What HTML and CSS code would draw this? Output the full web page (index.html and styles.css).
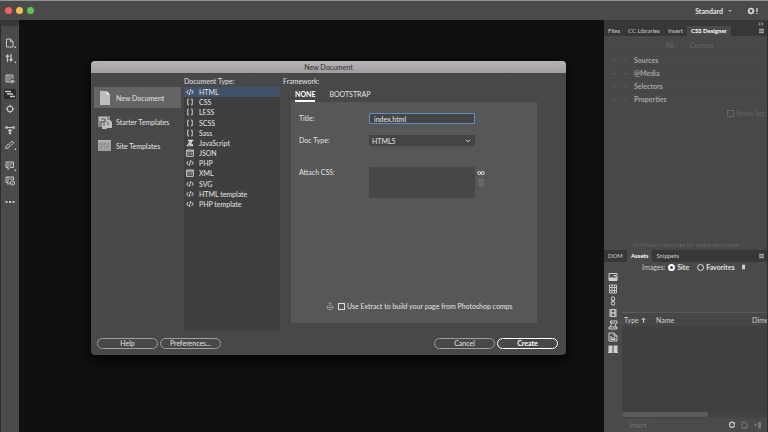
FILE: index.html
```html
<!DOCTYPE html>
<html lang="en">
<head>
<meta charset="utf-8">
<title>New Document</title>
<link rel="stylesheet" href="styles.css">
</head>
<body>
<svg class="defs" aria-hidden="true">
  <symbol id="code" viewBox="0 0 12 12"><path d="M3.500 3L1 6l2.500 3M8.500 3L11 6 8.500 9M7.300 1.500l-2.600 9" fill="none" stroke="currentColor" stroke-width="1.300"/></symbol>
  <symbol id="braces" viewBox="0 0 12 12"><path d="M4 1.500H2.800v3.300L1.700 6l1.100 1.200v3.300H4M8 1.500h1.200v3.300L10.300 6 9.200 7.200v3.300H8" fill="none" stroke="currentColor" stroke-width="1.400"/></symbol>
  <symbol id="scroll" viewBox="0 0 12 12"><path d="M3 1h8v2H9.500L8 8h2.500v3H1V8.500h2L4.500 3H3z" fill="currentColor"/><path d="M5.500 4h2.300M5 6h2.300M3 9.500h5" stroke="#444" stroke-width=".8"/></symbol>
  <symbol id="boxed" viewBox="0 0 12 12"><path d="M1 1.500h10v9.500H1zM1 3.200h10" fill="none" stroke="currentColor" stroke-width="1.300"/><path d="M4.500 5L3 7l1.500 2M7.500 5L9 7 7.500 9M6 6.200v1.600" fill="none" stroke="currentColor"/></symbol>
</svg>

<header class="titlebar">
  <div class="lights"><i class="red"></i><i class="yellow"></i><i class="green"></i></div>
  <button class="workspace">Standard <span class="caret"></span></button>
  <button class="gear" aria-label="Sync settings">
    <svg viewBox="0 0 12 8"><circle cx="4" cy="4" r="2.300" fill="none" stroke="currentColor" stroke-width="1.500"/><path d="M4 .5v7M.5 4h7M1.500 1.500l5 5M6.500 1.500l-5 5" stroke="currentColor" stroke-width=".7"/><circle cx="4" cy="4" r="1.400" fill="#4a4a4a"/><path d="M10 1v4M10 6v1" stroke="currentColor" stroke-width="1.200"/></svg>
  </button>
</header>

<div class="workarea">
  <nav class="tools" aria-label="Tools">
    <div class="group">
      <button aria-label="Open documents"><svg viewBox="0 0 12 10"><path d="M2.500 1h4L9 3.500V9H2.500zM6.500 1v2.700H9" fill="none" stroke="currentColor"/><path d="M12 8v2h-2z" fill="currentColor"/></svg></button>
      <button aria-label="File management"><svg viewBox="0 0 12 10"><path d="M3.500 9V2M7 1v7" stroke="currentColor" stroke-width="1.300"/><path d="M1.300 4l2.200-3 2.200 3zM4.800 6L7 9l2.200-3z" fill="currentColor"/><path d="M12 8v2h-2z" fill="currentColor"/></svg></button>
    </div>
    <div class="group">
      <button aria-label="Live view options"><svg viewBox="0 0 12 10"><path d="M8 8H2V1h7v4M4 1v7M5 3h3M5 5h2" fill="none" stroke="currentColor"/><path d="M5.500 7.500Q8 4.800 11 7.500 8 10.500 5.500 7.500" fill="#4a4a4a" stroke="currentColor" stroke-width=".8"/><circle cx="8.200" cy="7.500" r="1" fill="currentColor"/></svg></button>
      <button class="on" aria-label="Format source"><svg viewBox="0 0 12 10"><path d="M1 2.500h6M3 5h6M6 7.500h5" stroke="currentColor" stroke-width="1.300"/></svg></button>
      <button aria-label="Inspect"><svg viewBox="0 0 12 10"><circle cx="6" cy="5" r="2.700" fill="none" stroke="currentColor" stroke-width="1.100"/><path d="M6 .8v2M6 7.200v2M1.800 5h2M8.200 5h2" stroke="currentColor" stroke-width="1.100"/></svg></button>
    </div>
    <div class="group">
      <button aria-label="Expand all"><svg viewBox="0 0 12 10"><path d="M2 2.500h8M6 3.500v2" stroke="currentColor"/><path d="M1.500 1.500h2v2h-2zM8.500 1.500h2v2h-2zM3.800 5h4.400L6 7.500zM5 7.500h2v1.500H5z" fill="currentColor" stroke="currentColor" stroke-width=".4"/></svg></button>
      <button aria-label="Format"><svg viewBox="0 0 12 10"><path d="M1.500 8.500l1-3 2-1.500 1.500 1.500L5 7.500l-3 1.200M5.500 3.500L8 1.200l1.800 1.500L7 5.500" fill="none" stroke="currentColor"/><path d="M12 8v2h-2z" fill="currentColor"/></svg></button>
    </div>
    <div class="group">
      <button aria-label="Apply comment"><svg viewBox="0 0 12 10"><path d="M2 1h7.500v5.500H6L4 8.500v-2H2zM4 1v5M5.500 3h3M5.500 4.800h2" fill="none" stroke="currentColor"/><path d="M12 8v2h-2z" fill="currentColor"/></svg></button>
      <button aria-label="Remove comment"><svg viewBox="0 0 12 10"><path d="M6 6.500L4 8.500v-2H2V1h7.500v3M4 1v5M5.500 3h3" fill="none" stroke="currentColor"/><circle cx="8.500" cy="7" r="2.200" fill="#4a4a4a" stroke="currentColor"/><path d="M7 8.500l3-3" stroke="currentColor" stroke-width=".8"/></svg></button>
    </div>
    <div class="group">
      <button aria-label="More tools"><svg viewBox="0 0 12 10"><path d="M1.500 4h2v2h-2zM5 4h2v2H5zM8.500 4h2v2h-2z" fill="currentColor"/></svg></button>
    </div>
  </nav>

  <main class="canvas">
    <section class="dialog" role="dialog" aria-labelledby="dlg-title">
      <h1 id="dlg-title">New Document</h1>
      <div class="dialog-body">
        <div class="kinds">
          <button class="on"><svg viewBox="0 0 14 14"><path d="M2 0h6.500L12 3.500V14H2z" fill="#bcbcbc"/><path d="M8.500 0v3.500H12z" fill="#eee"/></svg>New Document</button>
          <button><svg viewBox="0 0 14 14"><path d="M0 1h12v11H0z" fill="#858585"/><path d="M1 2h8v4H1zM4 7h5v7H4zM9 5h3l2 2v6H9z" fill="#bebebe"/><path d="M3 4h4v3H3M6 8v3M10 7v3" fill="none" stroke="#555"/></svg>Starter Templates</button>
          <button><svg viewBox="0 0 14 14"><path d="M0 1h13v11H0z" fill="#a2a2a2"/><path d="M0 1h13v2H0z" fill="#b4b4b4"/><path d="M1 5h11M1 8h11M3 3v8M6.500 3v8M10 3v8" stroke="#929292" stroke-width=".6"/></svg>Site Templates</button>
        </div>
        <div class="types">
          <h2>Document Type:</h2>
          <div class="list">
            <ul>
              <li class="on"><svg><use href="#code"/></svg>HTML</li>
              <li><svg><use href="#braces"/></svg>CSS</li>
              <li><svg><use href="#braces"/></svg>LESS</li>
              <li><svg><use href="#braces"/></svg>SCSS</li>
              <li><svg><use href="#braces"/></svg>Sass</li>
              <li><svg><use href="#scroll"/></svg>JavaScript</li>
              <li><svg><use href="#boxed"/></svg>JSON</li>
              <li><svg><use href="#code"/></svg>PHP</li>
              <li><svg><use href="#boxed"/></svg>XML</li>
              <li><svg><use href="#code"/></svg>SVG</li>
              <li><svg><use href="#code"/></svg>HTML template</li>
              <li><svg><use href="#code"/></svg>PHP template</li>
            </ul>
          </div>
        </div>
        <div class="framework">
          <h2>Framework:</h2>
          <div class="fw-tabs"><button class="on">NONE</button><button>BOOTSTRAP</button></div>
          <form class="settings">
            <label for="title">Title:</label>
            <input id="title" type="text" value="index.html">
            <label for="doctype">Doc Type:</label>
            <div class="select">
              <select id="doctype"><option>HTML5</option></select>
              <svg viewBox="0 0 6 4"><path d="M1 .8l2 2 2-2" fill="none" stroke="currentColor"/></svg>
            </div>
            <label for="css" class="css-label">Attach CSS:</label>
            <textarea id="css"></textarea>
            <div class="css-actions">
              <button type="button" aria-label="Link style sheet"><svg viewBox="0 0 8 8"><circle cx="2.300" cy="4" r="1.500" fill="none" stroke="currentColor"/><circle cx="5.700" cy="4" r="1.500" fill="none" stroke="currentColor"/></svg></button>
              <button type="button" class="dim" aria-label="Remove style sheet"><svg viewBox="0 0 8 8"><path d="M1 2h6M3 2V1h2v1M2 2v5.500h4V2M4 3v4" fill="none" stroke="currentColor"/></svg></button>
            </div>
            <div class="extract">
              <svg viewBox="0 0 8 8"><path d="M4 .5v5M2.500 2L4 .5 5.500 2M2.500 3L.8 5.500l1.400 2h3.600l1.400-2L5.500 3M1 5.500h6" fill="none" stroke="currentColor" stroke-width=".9"/></svg>
              <input id="extract" type="checkbox"><label for="extract">Use Extract to build your page from Photoshop comps</label>
            </div>
          </form>
        </div>
      </div>
      <footer>
        <button>Help</button><button>Preferences...</button><span class="spring"></span><button>Cancel</button><button class="primary">Create</button>
      </footer>
    </section>
  </main>

  <aside class="panels">
    <div class="collapse"><svg viewBox="0 0 6 4"><path d="M.8.500l1.500 1.500L.8 3.500M3.500.500L5 2 3.500 3.500" fill="none" stroke="currentColor" stroke-width=".8"/></svg></div>
    <div class="tabs">
      <button>Files</button><button>CC Libraries</button><button>Insert</button><button class="on">CSS Designer</button>
      <svg class="menu" viewBox="0 0 6 6"><path d="M0 1h6M0 3h6M0 5h6" stroke="currentColor"/></svg>
    </div>
    <section class="designer">
      <div class="scope"><button>All</button><button>Current</button></div>
      <ul>
        <li><i>+</i><i>–</i>Sources</li>
        <li><i>+</i><i>–</i>@Media</li>
        <li><i>+</i><i>–</i>Selectors</li>
        <li><i>+</i><i>–</i>Properties</li>
      </ul>
      <div class="show-set"><input id="showset" type="checkbox" disabled><label for="showset">Show Set</label></div>
      <p>All Mode: Lists rules for entire document</p>
    </section>
    <div class="tabs lower">
      <button>DOM</button><button class="on">Assets</button><button>Snippets</button>
      <svg class="menu" viewBox="0 0 6 6"><path d="M0 1h6M0 3h6M0 5h6" stroke="currentColor"/></svg>
    </div>
    <section class="assets">
      <div class="source">
        <span>Images:</span>
        <input id="site" type="radio" name="src" checked><label for="site">Site</label>
        <input id="fav" type="radio" name="src"><label for="fav">Favorites</label>
        <svg viewBox="0 0 4 6"><path d="M0 0h4v6H0z" fill="currentColor"/></svg>
      </div>
      <div class="asset-body">
        <div class="asset-kinds">
          <button aria-label="Images"><svg viewBox="0 0 10 10"><path d="M1 1.500h8v7H1z" fill="none" stroke="currentColor"/><path d="M1 6l3-1 2 1 3-1v3.500H1zM5.500 3h2.500v1.500H5.500z" fill="currentColor"/></svg></button>
          <button aria-label="Colors"><svg viewBox="0 0 10 10"><path d="M1.500 1h7v8h-7zM1.500 3.500h7M1.500 6.500h7M4 1v8M6.500 1v8" fill="none" stroke="currentColor" stroke-width=".9"/></svg></button>
          <button aria-label="URLs"><svg viewBox="0 0 10 10"><rect x="3.300" y=".8" width="3.400" height="4" rx="1.700" fill="none" stroke="currentColor"/><rect x="3.300" y="5.200" width="3.400" height="4" rx="1.700" fill="none" stroke="currentColor"/><path d="M5 3.500v3" stroke="currentColor"/></svg></button>
          <button aria-label="Media"><svg viewBox="0 0 10 10"><path d="M1.500 1h7v8h-7z" fill="currentColor"/><path d="M3.800 2h2.500v2.300H3.800zM3.800 5.700h2.500V8H3.800z" fill="#484848"/><path d="M2.500 1.500v7M7.700 1.500v7" stroke="#484848" stroke-width=".6" stroke-dasharray="1 1"/></svg></button>
          <button aria-label="Scripts"><svg viewBox="0 0 10 10"><path d="M2.500 1h6.500v2H8L7 7h2v2H1V7h1.500l1-4h-1zM3.500 3H7M3 7h4" fill="none" stroke="currentColor"/></svg></button>
          <button aria-label="Templates"><svg viewBox="0 0 10 10"><path d="M1 1h5l3 3v5H1zM6 1v3h3M3 4v3.500h4V6H3" fill="none" stroke="currentColor"/></svg></button>
          <button aria-label="Library"><svg viewBox="0 0 10 10"><path d="M.5 1.500h4V8h-4zM5.500 1.500h4V8h-4zM0 8h4.500v1H0zM5.500 8H10v1H5.500z" fill="currentColor"/></svg></button>
        </div>
        <div class="listing">
          <div class="preview"></div>
          <div class="grid">
            <table><thead><tr><th class="c-type">Type <svg viewBox="0 0 5 6"><path d="M2.500 6V1M.5 3l2-2 2 2" fill="none" stroke="currentColor"/></svg></th><th class="c-name">Name</th><th class="c-dim">Dime</th></tr></thead></table>
          </div>
          <div class="scroll"><i></i></div>
          <div class="actions">
            <button class="insert" disabled>Insert</button>
            <button aria-label="Refresh"><svg viewBox="0 0 8 8"><path d="M6 2A2.600 2.600 0 1 0 6.600 4.500" fill="none" stroke="currentColor" stroke-width="1.200"/><path d="M7 .8v2.700H4.500z" fill="currentColor"/></svg></button>
            <button class="dim" aria-label="Edit"><svg viewBox="0 0 8 8"><path d="M1 1h3l2 2v4H1zM4 7l3-3" fill="none" stroke="currentColor"/></svg></button>
            <button class="dim" aria-label="Add to favorites"><svg viewBox="0 0 8 8"><path d="M4 1h3v6.500H4z" fill="currentColor"/><path d="M0 4h3M1.500 2.500v3" stroke="currentColor"/></svg></button>
          </div>
        </div>
      </div>
    </section>
  </aside>
</div>
</body>
</html>
```
FILE: styles.css
```css
* { box-sizing: border-box; }
body {
  margin: 0;
  height: 100vh;
  display: flex;
  flex-direction: column;
  overflow: hidden;
  background: #4a4a4a;
  color: #e4e4e4;
  font: 7px/10px Lato, "Noto Sans", sans-serif;
  border-top: 1px solid #8b968f;
}
button, input, select, textarea {
  font: inherit;
  color: inherit;
  margin: 0;
  padding: 0;
  border: 0;
  background: none;
}
h1, h2, p, ul { margin: 0; padding: 0; font: inherit; list-style: none; }
svg { display: block; flex: none; }
.defs { position: absolute; width: 0; height: 0; }

.titlebar { height: 19px; flex: none; display: flex; align-items: center; padding: 0 9px 0 5px; }
.lights { display: flex; gap: 4px; flex: 1; }
.lights i { width: 7px; height: 7px; border-radius: 50%; }
.red { background: #f0625c; }
.yellow { background: #f5bd4f; }
.green { background: #5fc454; }
.workspace { display: flex; align-items: center; gap: 5px; font-weight: 700; }
.caret { border: 2px solid transparent; border-top-color: #aaa; border-bottom: 0; }
.gear { margin-left: 15px; }
.gear svg { width: 12px; height: 8px; }

.workarea { flex: 1; display: flex; min-height: 0; }

.tools {
  width: 19px;
  flex: none;
  border-left: 1px solid #2c2c2c;
  border-top: 6px solid #383838;
  padding-top: 12px;
  display: flex;
  flex-direction: column;
  gap: 11px;
  align-items: center;
  color: #c6c6c6;
}
.group { display: flex; flex-direction: column; gap: 5px; }
.tools button { display: block; padding: 0; }
.tools svg { width: 12px; height: 10px; }
.tools .on { background: #2c2c2c; }

.canvas { flex: 1; min-width: 0; background: #101010; padding: 41px 38px 77px 72px; }
.dialog {
  height: 100%;
  display: flex;
  flex-direction: column;
  background: #484848;
  border-radius: 4px;
  box-shadow: 0 4px 14px #000;
  overflow: hidden;
}
.dialog h1 {
  background: linear-gradient(#b8b4b8, #9f9b9f);
  color: #2e2e2e;
  text-align: center;
  line-height: 12px;
  flex: none;
}
.dialog-body { flex: 1; min-height: 0; display: flex; padding: 3px 29px 0 3px; }
.kinds { width: 87px; flex: none; padding-top: 11px; margin-right: 3px; display: flex; flex-direction: column; gap: 3px; }
.kinds button { height: 21px; display: flex; align-items: center; gap: 4px; padding-left: 4px; }
.kinds .on { background: #646464; }
.kinds svg { width: 14px; height: 14px; }
h2 { height: 11px; }
.types { width: 96px; flex: none; display: flex; flex-direction: column; }
.list { flex: 1; background: #3f3f3f; }
.list ul { height: 122px; display: grid; grid-auto-rows: 1fr; }
.types li { display: flex; align-items: center; gap: 5px; padding-left: 2px; }
.types .on { background: #41536b; }
.types svg { width: 8px; height: 8px; }

.framework { flex: 1; min-width: 0; padding-left: 3px; display: flex; flex-direction: column; }
.fw-tabs { display: flex; gap: 14px; padding-left: 12px; margin-top: 1px; }
.fw-tabs button { height: 14px; border-bottom: 2px solid transparent; }
.fw-tabs .on { color: #fff; font-weight: 700; border-color: #fff; }
.settings {
  flex: 1;
  margin: 0 0 8px 8px;
  padding: 11px 9px 12px 8px;
  background: #575757;
  display: grid;
  grid-template-columns: 70px 106px 1fr;
  grid-template-rows: 11px 11px 41px 1fr;
  row-gap: 11px;
}
.settings > label { grid-column: 1; line-height: 11px; }
.settings > input, .select, .settings > textarea { grid-column: 2; }
#title { width: 100%; border: 1px solid #5d8fc9; background: #454545; padding-left: 4px; height: 11px; border-radius: 1px; outline: 0; }
.select { display: grid; align-items: center; background: #444; }
.select select { grid-area: 1 / 1; appearance: none; width: 100%; height: 11px; padding-left: 3px; }
.select svg { grid-area: 1 / 1; justify-self: end; margin-right: 4px; width: 6px; height: 4px; pointer-events: none; }
#css { background: #474747; resize: none; height: 31px; width: 100%; align-self: end; }
.settings > .css-label { padding-top: 10px; }
.css-actions { display: flex; flex-direction: column; gap: 1px; padding: 12px 0 0 2px; }
.css-actions svg { width: 8px; height: 8px; }
.dim { color: #777; }
.extract { grid-column: 1 / -1; align-self: end; display: flex; align-items: center; padding-left: 27px; }
.extract svg { width: 8px; height: 8px; color: #999; margin-right: 4px; }
input[type=checkbox] { appearance: none; width: 7px; height: 7px; border: 1px solid #ddd; margin-right: 2px; flex: none; }

footer { display: flex; gap: 2px; padding: 7px 8px 6px 6px; }
footer button { width: 61px; height: 11px; line-height: 9px; border: 1px solid #a0a0a0; border-radius: 6px; }
footer .primary { border-color: #fff; color: #fff; font-weight: 700; }
.spring { flex: 1; }

.panels { width: 164px; flex: none; display: flex; flex-direction: column; overflow: hidden; border-right: 1px solid #2f2f2f; color: #cfcfcf; }
.collapse { height: 6px; background: #383838; display: flex; justify-content: end; align-items: end; padding-right: 3px; }
.collapse svg { width: 6px; height: 4px; }
.tabs { height: 10px; flex: none; display: flex; background: #373737; font-size: 6px; line-height: 10px; }
.tabs button { padding: 0 4px; white-space: nowrap; }
.tabs .on { background: #4a4a4a; color: #fff; font-weight: 700; }
.menu { width: 5px; height: 6px; margin: 2px 3px 0 auto; }
.designer { height: 214px; background: #484848; display: flex; flex-direction: column; color: #a6a6a6; font-weight: 700; }
.scope { display: flex; justify-content: center; gap: 16px; height: 17px; padding-left: 8px; color: #606060; }
.designer li { display: flex; align-items: center; height: 13px; border-top: 1px solid #444; padding-left: 8px; }
.designer li i { width: 11px; color: #626262; font-style: normal; }
.show-set { display: flex; align-items: center; justify-content: flex-end; white-space: nowrap; height: 16px; color: #666; padding-right: 2px; font-weight: 400; }
.show-set input { border-color: #666; }
.designer p { margin-top: auto; text-align: center; color: #656565; font-size: 6px; font-weight: 400; }
.lower { height: 12px; line-height: 12px; }
.lower .menu { margin-top: 3px; }
.assets { flex: 1; min-height: 0; display: flex; flex-direction: column; }
.source { height: 10px; flex: none; display: flex; align-items: center; padding-left: 38px; }
input[type=radio] { appearance: none; width: 7px; height: 7px; border: 1px solid #ddd; border-radius: 50%; margin: 0 2px 0 3px; }
input[type=radio]:checked { border: 2px solid #fff; }
.source label { font-weight: 700; color: #e0e0e0; }
#fav { margin-left: 8px; }
.source svg { width: 3px; height: 6px; margin-left: 8px; }
.asset-body { flex: 1; display: flex; min-height: 0; }
.asset-kinds { width: 18px; flex: none; display: flex; flex-direction: column; gap: 2px; padding-left: 4px; color: #d0d0d0; }
.asset-kinds svg { width: 10px; height: 10px; }
.listing { flex: 1; min-width: 0; display: flex; flex-direction: column; }
.preview { height: 41px; border-bottom: 1px solid #5a5a5a; }
.grid { flex: 1; background: #404040; }
table { border-collapse: collapse; table-layout: fixed; width: 100%; }
th { font-weight: 400; text-align: left; height: 13px; padding: 0 0 0 2px; background: #474747; }
th svg { display: inline-block; width: 5px; height: 6px; }
.c-type { width: 32px; }
.c-name { width: 96px; }
.scroll { height: 6px; background: #434343; }
.scroll i { display: block; width: 59%; height: 5px; border-radius: 3px; background: #5c5c5c; }
.actions { height: 14px; display: flex; align-items: center; gap: 5px; padding-right: 5px; }
.actions svg { width: 8px; height: 8px; }
.insert { width: 32px; height: 11px; line-height: 9px; border: 1px solid #525252; border-radius: 6px; color: #777; margin-right: auto; }
```
